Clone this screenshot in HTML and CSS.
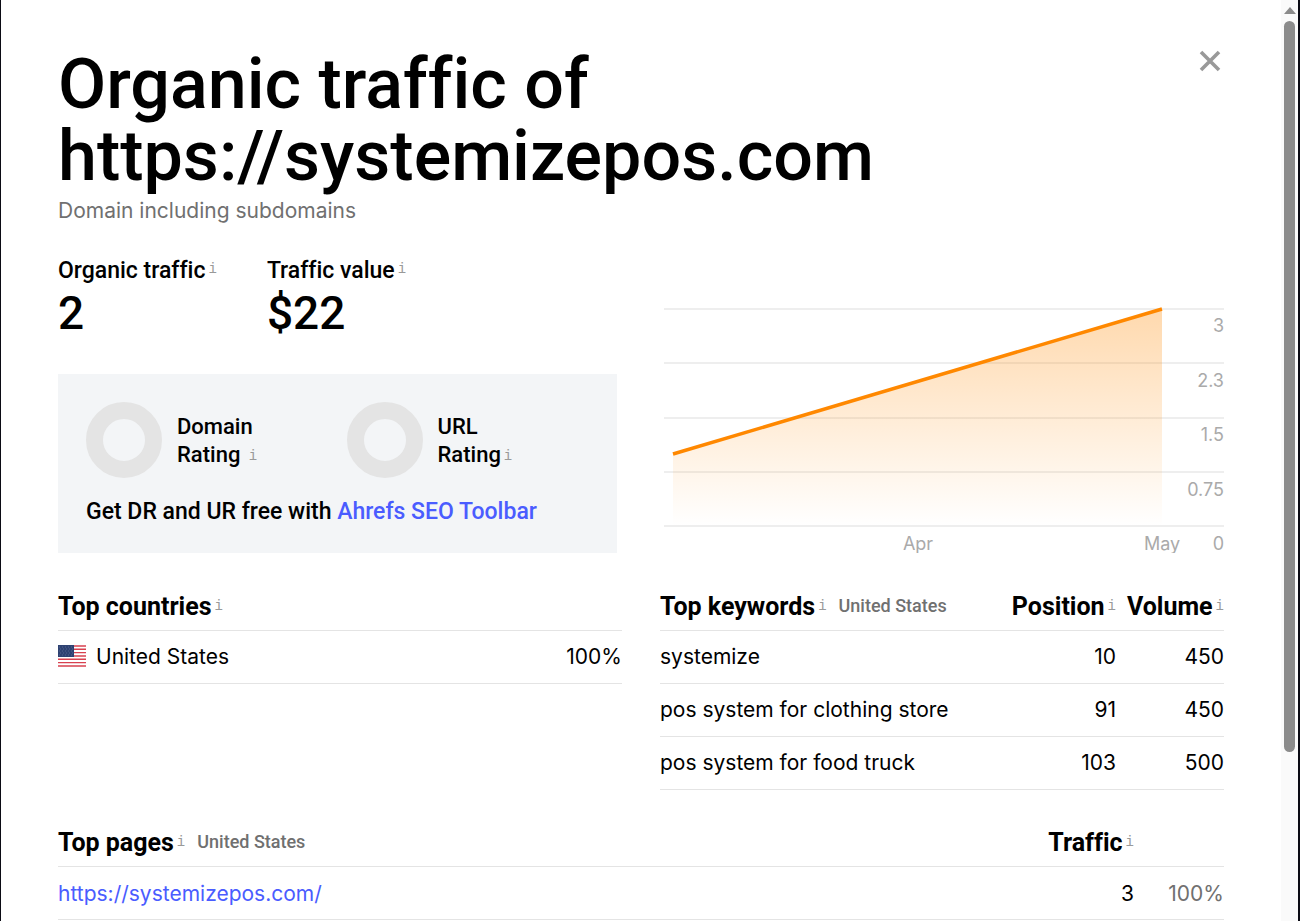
FILE: index.html
```html
<!DOCTYPE html>
<html lang="en">
<head>
    <meta charset="UTF-8">
    <title>Organic traffic of https://systemizepos.com</title>
    <link rel="stylesheet" href="styles.css">
</head>
<body>
    <div class="modal">
        <div class="content">
            <button class="close" type="button" aria-label="Close">
                <svg width="22" height="22" viewBox="0 0 22 22"><path d="M2 2L20 20M20 2L2 20" stroke="#999" stroke-width="3.6" fill="none"/></svg>
            </button>
            <h1>Organic traffic of<br>https://systemizepos.com</h1>
            <p class="mode">Domain including subdomains</p>

            <div class="columns overview">
                <div>
                    <div class="metrics">
                        <div class="metric">
                            <div class="label">Organic traffic<i class="info">i</i></div>
                            <div class="value">2</div>
                        </div>
                        <div class="metric">
                            <div class="label">Traffic value<i class="info">i</i></div>
                            <div class="value">$22</div>
                        </div>
                    </div>
                    <div class="ratings">
                        <div class="rating-row">
                            <div class="rating">
                                <div class="ring"></div>
                                <div class="label">Domain<br>Rating <i class="info low">i</i></div>
                            </div>
                            <div class="rating">
                                <div class="ring"></div>
                                <div class="label">URL<br>Rating<i class="info low">i</i></div>
                            </div>
                        </div>
                        <p class="label">Get DR and UR free with <a href="#">Ahrefs SEO Toolbar</a></p>
                    </div>
                </div>
                <svg class="chart" viewBox="0 0 564 250">
                    <defs>
                        <linearGradient id="area" x1="0" y1="0" x2="0" y2="1">
                            <stop offset="0" stop-color="#ff8800" stop-opacity="0.32"/>
                            <stop offset="1" stop-color="#ff8800" stop-opacity="0"/>
                        </linearGradient>
                    </defs>
                    <path d="M4 6H564M4 60H564M4 115H564M4 169H564M4 223H564" stroke="#eeeeee" stroke-width="2"/>
                    <path d="M13 151L502 6V223H13Z" fill="url(#area)"/>
                    <path d="M13 151L502 6" stroke="#ff8800" stroke-width="3.5"/>
                    <g text-anchor="end">
                        <text x="564" y="29">3</text>
                        <text x="564" y="84">2.3</text>
                        <text x="564" y="138">1.5</text>
                        <text x="564" y="193">0.75</text>
                        <text x="564" y="247">0</text>
                    </g>
                    <g text-anchor="middle">
                        <text x="258" y="247">Apr</text>
                        <text x="502" y="247">May</text>
                    </g>
                </svg>
            </div>

            <div class="columns tables">
                <table>
                    <thead>
                        <tr><th colspan="2">Top countries<i class="info">i</i></th></tr>
                    </thead>
                    <tbody>
                        <tr>
                            <td>
                                <svg class="flag" width="28" height="22" viewBox="0 0 28 22">
                                    <path fill="#fff" d="M0 0h28v22H0z"/>
                                    <path stroke="#d8414f" stroke-width="1.4" d="M0 1h28M0 4.3h28M0 7.6h28M0 11h28M0 14.3h28M0 17.6h28M0 21h28"/>
                                    <path fill="#2e4272" d="M0 0h16v12H0z"/>
                                    <path stroke="#52628f" stroke-dasharray="1 2" d="M1 2h14M2 4h13M1 6h14M2 8h13M1 10h14"/>
                                </svg>United States</td>
                            <td class="num">100%</td>
                        </tr>
                    </tbody>
                </table>
                <table>
                    <thead>
                        <tr>
                            <th>Top keywords<i class="info">i</i><span class="country">United States</span></th>
                            <th class="num">Position<i class="info">i</i></th>
                            <th class="num volume">Volume<i class="info">i</i></th>
                        </tr>
                    </thead>
                    <tbody>
                        <tr><td>systemize</td><td class="num">10</td><td class="num">450</td></tr>
                        <tr><td>pos system for clothing store</td><td class="num">91</td><td class="num">450</td></tr>
                        <tr><td>pos system for food truck</td><td class="num">103</td><td class="num">500</td></tr>
                    </tbody>
                </table>
            </div>

            <table class="pages">
                <thead>
                    <tr>
                        <th>Top pages<i class="info">i</i><span class="country">United States</span></th>
                        <th class="num">Traffic<i class="info">i</i></th>
                        <th class="share"></th>
                    </tr>
                </thead>
                <tbody>
                    <tr><td><a href="#">https://systemizepos.com/</a></td><td class="num">3</td><td class="num share">100%</td></tr>
                </tbody>
            </table>
        </div>
        <div class="scrollbar">
            <svg width="12" height="7" viewBox="0 0 12 7"><path fill="#8b8b8b" d="M6 0L12 7H0z"/></svg>
            <div class="thumb"></div>
        </div>
    </div>
</body>
</html>
```
FILE: styles.css
```css
* {
    box-sizing: border-box;
}
body {
    margin: 0;
    background: #0b0b14;
    color: #000;
    font: 21px/28px Inter, sans-serif;
    font-variant-ligatures: none;
}
h1, p {
    margin: 0;
}
a {
    color: #4a5cff;
    text-decoration: none;
}
.modal {
    display: flex;
    height: 100vh;
    overflow: hidden;
    margin: 0 2px 0 1px;
    background: #fff;
}
.content {
    position: relative;
    flex: 1;
    padding: 48px 57px 0;
}
.close {
    position: absolute;
    top: 50px;
    right: 60px;
    width: 22px;
    height: 22px;
    padding: 0;
    border: 0;
    background: none;
}
.close svg {
    display: block;
}
h1 {
    font-family: Roboto, sans-serif;
    font-size: 70px;
    font-weight: 500;
    line-height: 72px;
}
.mode {
    padding-top: 5px;
    color: #707070;
}
.columns {
    display: grid;
    grid-template-columns: 1fr 1fr;
    gap: 38px;
}
.overview {
    margin-top: 31px;
    align-items: end;
}
.metrics {
    display: flex;
    gap: 50px;
}
.label {
    font-family: Roboto, sans-serif;
    font-size: 23px;
    font-weight: 500;
}
.metric .label {
    line-height: 30px;
}
.value {
    font-family: Roboto, sans-serif;
    font-size: 46px;
    font-weight: 500;
    line-height: 54px;
}
.info {
    margin-left: 3px;
    vertical-align: 5px;
    color: #999;
    font-family: "Liberation Mono", monospace;
    font-size: 14px;
    font-style: normal;
    font-weight: 400;
    line-height: 14px;
}
.low {
    vertical-align: 2px;
}
.ratings {
    margin: 34px 5px 0 0;
    padding: 28px 28px 27px;
    background: #f3f5f7;
}
.rating-row {
    display: grid;
    grid-template-columns: 1fr 1fr;
    gap: 18px;
}
.rating {
    display: flex;
    align-items: center;
    gap: 15px;
}
.rating .label {
    padding-top: 2px;
    font-size: 22px;
}
.ring {
    width: 76px;
    height: 76px;
    border: 17px solid #e4e4e4;
    border-radius: 50%;
}
.ratings p {
    padding-top: 20px;
}
.chart {
    display: block;
    width: 100%;
}
.chart text {
    fill: #aaa;
    font-size: 18px;
}
.tables {
    align-items: start;
    margin-top: 24px;
}
table {
    width: 100%;
    border-collapse: collapse;
}
th, td {
    height: 53px;
    padding: 1px 0 0;
    border-bottom: 1px solid #e4e4e4;
    text-align: left;
    white-space: nowrap;
}
th {
    padding-top: 7px;
    font-family: Roboto, sans-serif;
    font-size: 25px;
    font-weight: 700;
}
.num {
    text-align: right;
}
.volume {
    width: 108px;
}
.country {
    margin-left: 12px;
    vertical-align: 3px;
    color: #707070;
    font-size: 18px;
    font-weight: 500;
    line-height: 20px;
}
.flag {
    margin-right: 10px;
    vertical-align: -3px;
}
.pages {
    margin-top: 24px;
}
.share {
    width: 90px;
    color: #707070;
}
.scrollbar {
    display: flex;
    flex-direction: column;
    align-items: center;
    gap: 7px;
    width: 17px;
    padding-top: 7px;
    background: #fafafa;
}
.thumb {
    width: 11px;
    height: 80%;
    border-radius: 6px;
    background: #8b8b8b;
}
```
